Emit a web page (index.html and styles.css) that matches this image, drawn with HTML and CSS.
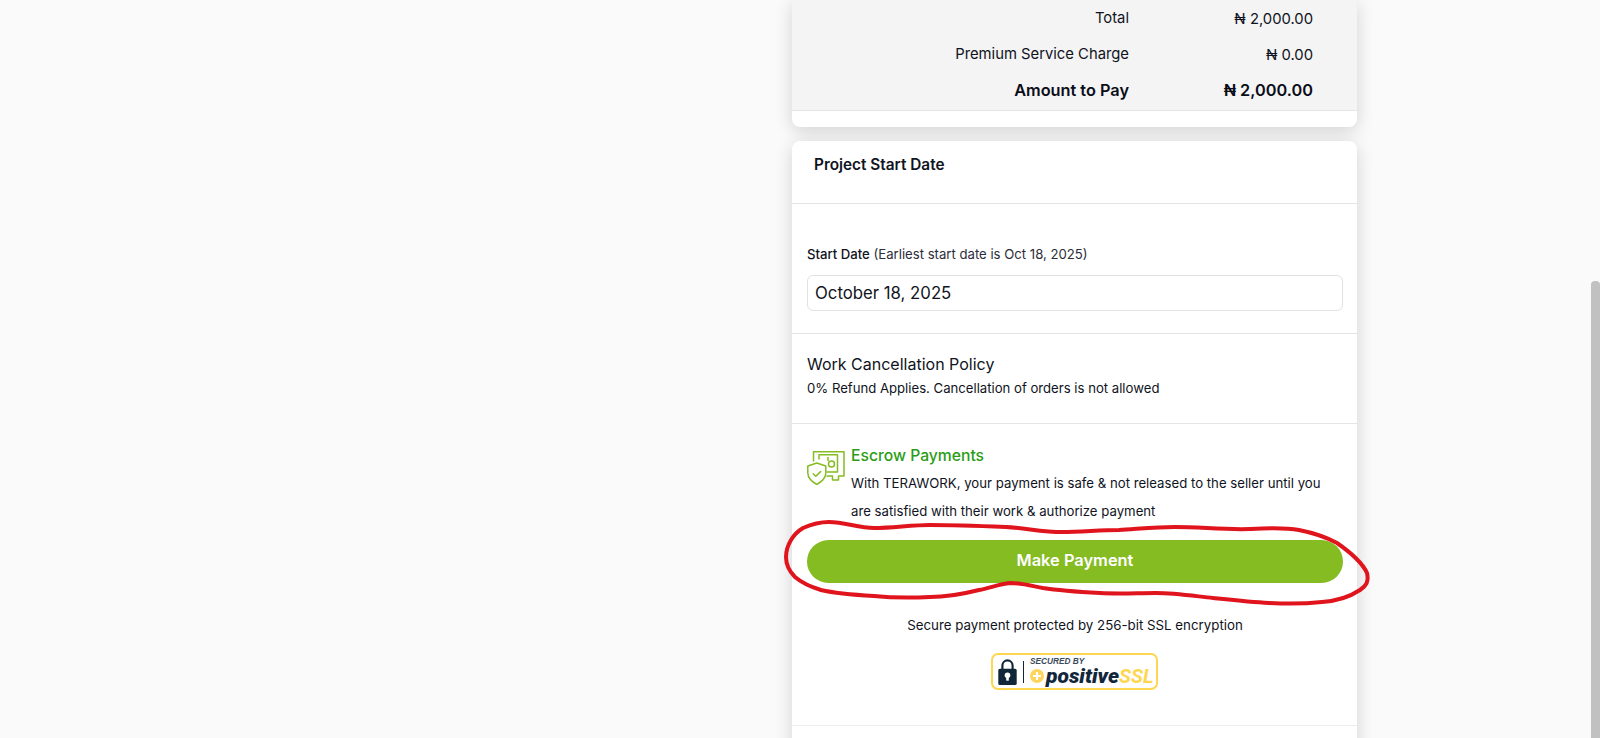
FILE: index.html
```html
<!DOCTYPE html>
<html lang="en">
<head>
<meta charset="utf-8">
<title>Checkout</title>
<link rel="stylesheet" href="styles.css">
</head>
<body>
<div class="page">
  <main class="column">
    <section class="card summary-card">
      <div class="summary">
        <div class="row"><span>Total</span><span class="amount">₦ 2,000.00</span></div>
        <div class="row"><span>Premium Service Charge</span><span class="amount">₦ 0.00</span></div>
        <div class="row row-strong"><span>Amount to Pay</span><span>₦ 2,000.00</span></div>
      </div>
    </section>
    <section class="card">
      <header class="card-head"><h2>Project Start Date</h2></header>
      <div class="date-section">
        <label class="date-label"><span class="dark">Start Date</span> (Earliest start date is Oct 18, 2025)</label>
        <div class="date-input">October 18, 2025</div>
      </div>
      <div class="policy">
        <h3>Work Cancellation Policy</h3>
        <p>0% Refund Applies. Cancellation of orders is not allowed</p>
      </div>
      <div class="pay-section">
        <div class="escrow">
          <svg class="escrow-icon" viewBox="0 0 38 34" fill="none" stroke="#84bc21" stroke-width="1.5" stroke-linejoin="round" stroke-linecap="round">
            <path d="M6.5 10V.8H37V25H31.5V29H25.5V25H20"/>
            <path d="M12 8V3.8H30.5V21H20"/>
            <path d="M21 6.5V9.5"/>
            <circle cx="24.5" cy="13" r="3"/>
            <path d="M9.8 12 18.8 15V22C18.8 28 14 31 9.8 33.5 5.6 31 .8 28 .8 22V15Z"/>
            <path d="M6.2 22.8 8.8 25.3 13.6 20.6"/>
          </svg>
          <div class="escrow-text">
            <h3>Escrow Payments</h3>
            <p>With TERAWORK, your payment is safe &amp; not released to the seller until you are satisfied with their work &amp; authorize payment</p>
          </div>
        </div>
        <button class="pay-button" type="button">Make Payment</button>
        <p class="secure">Secure payment protected by 256-bit SSL encryption</p>
        <div class="badge">
          <svg class="badge-lock" viewBox="0 0 17 24">
            <path d="M3.8 10V6a4.7 4.7 0 0 1 9.4 0V10" fill="none" stroke="#12263a" stroke-width="2"/>
            <rect x="0" y="9" width="17" height="15" rx="1.5" fill="#12263a"/>
            <circle cx="8.5" cy="15" r="2.6" fill="#fff"/>
            <rect x="7.3" y="15" width="2.4" height="5" fill="#fff"/>
          </svg>
          <span class="badge-rule"></span>
          <div class="badge-text">
            <span class="badge-small">SECURED BY</span>
            <div class="badge-brand">
              <svg class="badge-plus" viewBox="0 0 14 14">
                <circle cx="7" cy="7" r="7" fill="#ffd45c"/>
                <path d="M7 3V11M3 7H11" stroke="#fff" stroke-width="2"/>
              </svg>
              <span class="brand-positive">positive</span><span class="brand-ssl">SSL</span>
            </div>
          </div>
        </div>
      </div>
      <div class="card-foot"></div>
    </section>
  </main>
  <div class="scroll-track"><div class="scroll-thumb"></div></div>
</div>
<svg class="annotation" viewBox="0 0 1600 738" fill="none">
  <path d="M803 528C812 524 820 522 829 522C845 522 858 528 874 528C893 528 911 525 930 525C956 525 981 526 1006 527C1025 528 1043 532 1062 532C1081 532 1100 530 1119 530C1137 529 1156 527 1175 527C1200 527 1225 530 1250 529C1267 528 1283 527 1299 530C1314 533 1326 537 1337 543C1350 552 1362 562 1367 573C1369 582 1366 586 1360 590C1348 598 1336 601 1322 602C1304 604 1287 604 1269 603C1250 602 1232 600 1213 598C1194 596 1175 593 1156 593C1137 593 1119 594 1100 593C1081 592 1062 591 1043 588C1032 586 1021 583 1010 583C999 584 990 588 979 590C963 594 946 597 930 597C911 598 893 598 874 596C856 595 838 594 821 590C811 587 802 583 795 577C789 571 786 564 786 557C786 550 788 545 791 540C794 535 798 531 803 528Z" stroke="#e0141c" stroke-width="4"/>
</svg>
</body>
</html>
```
FILE: styles.css
```css
* {
  box-sizing: border-box;
}

html,
body {
  margin: 0;
  height: 738px;
  overflow: hidden;
}

body {
  position: relative;
  background: #fafafa;
  color: #101322;
  font-family: Inter, "Noto Sans", sans-serif;
}

h2,
h3,
p {
  margin: 0;
}

.page {
  display: flex;
  height: 738px;
  padding-left: 792px;
}

.column {
  display: flex;
  flex-direction: column;
  gap: 14px;
  width: 565px;
}

.card {
  flex: none;
  background: #fff;
  border-radius: 8px;
  box-shadow: 0 4px 18px rgba(0, 0, 0, 0.16);
}

.summary-card {
  height: 127px;
  border-radius: 0 0 8px 8px;
}

.summary {
  height: 111px;
  background: #f4f4f4;
  border-bottom: 1px solid #e4e4e4;
}

.row {
  display: grid;
  grid-template-columns: 337px 184px;
  align-items: center;
  height: 36px;
  font-size: 14.8px;
  text-align: right;
}

.amount {
  padding-top: 1px;
}

.row-strong {
  font-size: 16.3px;
  font-weight: 600;
  color: #0a0c18;
}

.card-head {
  height: 63px;
  padding: 14px 22px 0;
  border-bottom: 1px solid #e4e4e4;
}

.card-head h2 {
  font-size: 15.35px;
  line-height: 20px;
  font-weight: 600;
}

.date-section {
  height: 130px;
  padding: 41px 14px 0 15px;
  border-bottom: 1px solid #e4e4e4;
}

.date-label {
  display: block;
  font-size: 13.15px;
  line-height: 18px;
  color: #2a2d3a;
}

.dark {
  color: #101322;
  font-weight: 450;
}

.date-input {
  height: 36px;
  margin-top: 12px;
  padding-left: 7px;
  border: 1px solid #e2e2e2;
  border-radius: 6px;
  font-size: 16.75px;
  line-height: 34px;
}

.policy {
  height: 90px;
  padding: 19px 15px 0;
  border-bottom: 1px solid #e4e4e4;
}

.policy h3 {
  font-size: 16px;
  line-height: 22px;
  font-weight: 400;
}

.policy p {
  font-size: 13.15px;
  line-height: 20px;
  margin-top: 3px;
}

.pay-section {
  height: 302px;
  padding: 22px 14px 0 15px;
  border-bottom: 1px solid #ececec;
}

.escrow {
  display: flex;
  gap: 6px;
}

.escrow-icon {
  flex: none;
  width: 38px;
  height: 34px;
  margin-top: 5px;
}

.escrow-text h3 {
  font-size: 15.7px;
  line-height: 20px;
  font-weight: 500;
  color: #2b9d14;
}

.escrow-text p {
  font-size: 13.2px;
  line-height: 28px;
  margin-top: 3px;
}

.pay-button {
  display: block;
  width: 100%;
  height: 43px;
  margin-top: 15px;
  padding: 0 0 3px;
  border: 0;
  border-radius: 22px;
  background: #84bc21;
  color: #fff;
  font-family: inherit;
  font-size: 16.4px;
  font-weight: 600;
}

.secure {
  margin-top: 33px;
  font-size: 13.3px;
  line-height: 18px;
  text-align: center;
}

.badge {
  display: flex;
  align-items: center;
  width: 167px;
  height: 37px;
  margin: 19px 0 0 184px;
  padding: 0 0 0 5px;
  border: 2.5px solid #ffd650;
  border-radius: 7px;
  background: #fff;
}

.badge-lock {
  flex: none;
  width: 19px;
  height: 26px;
  margin-right: 6px;
}

.badge-rule {
  flex: none;
  width: 1px;
  height: 22px;
  margin-right: 6px;
  background: #12263a;
}

.badge-text {
  display: flex;
  flex-direction: column;
}

.badge-small {
  font-family: "Liberation Sans", sans-serif;
  font-size: 8.3px;
  line-height: 9px;
  font-weight: 700;
  font-style: italic;
  color: #3a4b5c;
}

.badge-brand {
  display: flex;
  align-items: center;
  font-family: Roboto, sans-serif;
  font-size: 21px;
  line-height: 20px;
  font-weight: 900;
  font-style: italic;
}

.badge-plus {
  flex: none;
  width: 14px;
  height: 14px;
  margin-right: 2px;
}

.brand-positive {
  color: #12263a;
}

.brand-ssl {
  color: #ffd650;
  font-size: 20px;
  font-weight: 700;
}

.card-foot {
  height: 40px;
}

.scroll-track {
  margin-left: auto;
  width: 9px;
  padding-top: 281px;
}

.scroll-thumb {
  height: 457px;
  background: #c1c1c1;
  border-radius: 4px 4px 0 0;
}

.annotation {
  position: absolute;
  top: 0;
  left: 0;
  width: 1600px;
  height: 738px;
  pointer-events: none;
}
```
